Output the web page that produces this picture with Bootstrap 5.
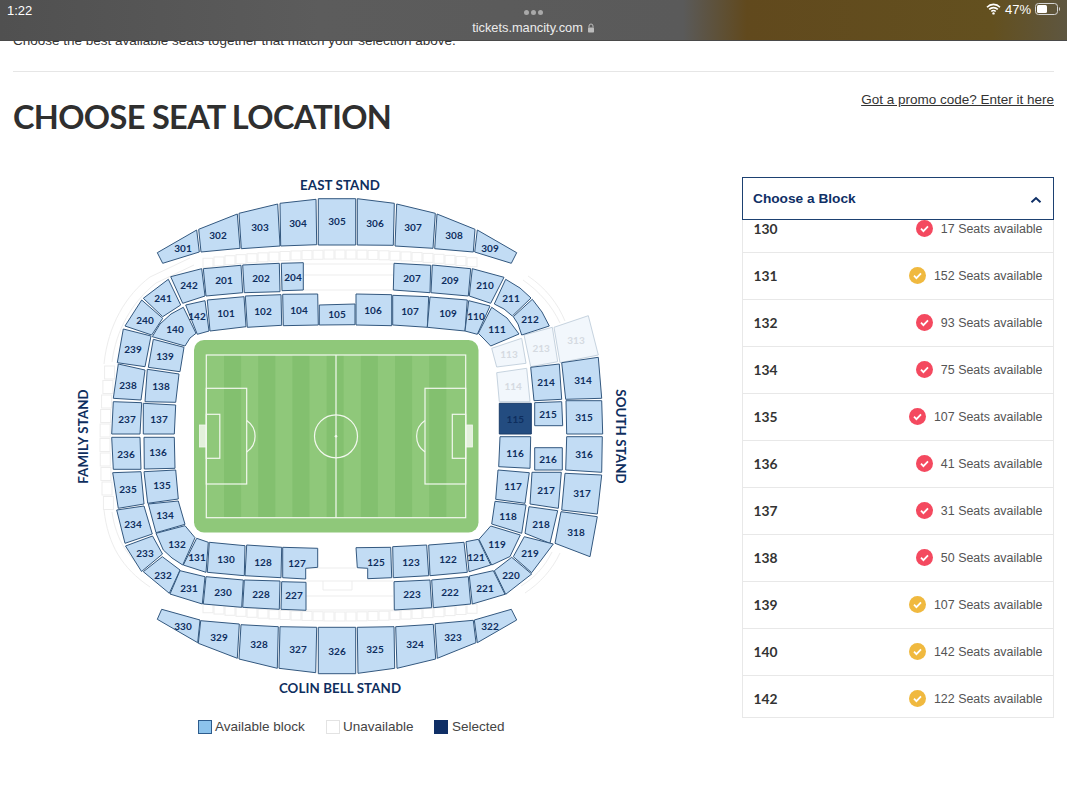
<!DOCTYPE html>
<html lang="en">
<head>
<meta charset="utf-8">
<title>Choose seat location</title>
<link href="https://cdn.jsdelivr.net/npm/bootstrap@5.3.0/dist/css/bootstrap.min.css" rel="stylesheet">
<style>
html,body{background:#fff;height:800px;overflow:hidden}
body{font-family:"Liberation Sans",Arial,sans-serif;color:#3a3a3a}
.ipad-bar{height:41px;background:linear-gradient(90deg,#505050 0,#5c5c5c 30%,#5a5a5a 64%,#61491d 70%,#63501f 93%,#5e5640 100%);border-bottom:1px solid #4a4a4a;color:#fff}
.bar-time{font-size:13px;line-height:1;padding:4px 0 0 7px}
.bar-mid{top:0;left:50%;transform:translateX(-50%);width:160px;text-align:center}
.bar-dots{height:16px;padding-top:10px}
.bar-dots i{display:inline-block;width:5px;height:5px;border-radius:50%;background:#a9a9a9;margin:0 1px;vertical-align:top}
.bar-host{font-size:12.8px;line-height:1;margin-top:6px;color:#ececec}
.bar-right{font-size:13px;line-height:1;padding:3px 6px 0 0}
.page-wrap{padding:33px 13px 0}
.intro-text{font-size:13.5px;line-height:16px;margin:0 0 22px;color:#333}
.rule-line{margin:0;border:0;border-top:1px solid #e6e6e6;opacity:1}
.head-row{height:105px}
.page-title{font-family:Lato,sans-serif;font-weight:700;font-size:32.5px;line-height:44px;color:#2f2f2f;margin:23px 0 0;letter-spacing:-.65px}
.promo-link{font-size:13.5px;color:#333;text-decoration:underline;margin-top:18px}
.map-col{width:570px;margin-left:57px}
.map-svg{display:block;width:570px;height:530px}
.map-legend{font-size:13.5px;line-height:16px;color:#444;margin:12px 0 0 128px}
.key-box{display:inline-block;width:14px;height:14px;border:1px solid #2d5c8d;background:#8cc3ec}
.key-none{background:#fff;border-color:#e3e3e3}
.key-sel{background:#0f2f66;border-color:#0f2f66}
.legend-item{gap:3px}
.legend-a{width:128px}.legend-b{width:108px}
.legend-c{gap:4px}
.block-col{width:312px;margin-left:auto}
.block-head{height:43px;border:1px solid #1d4171;padding:2px 11px 0 10px;font-size:13.7px;font-weight:700;color:#0f2f66}
.block-list{height:498px;overflow:hidden;border:1px solid #e8e8e8;border-top:0;border-radius:0}
.block-item{height:47px;flex:none;padding:0 10.5px;border-color:#e8e8e8;border-width:0 0 1px;color:#555;font-size:12.45px}
.block-list .block-item:first-child{margin-top:-14px;border-radius:0}
.block-no{font-family:Lato,sans-serif;font-weight:700;font-size:13.8px;color:#333}
.seat-note{gap:8px}
.seat-poly{fill:#c2dcf4;stroke:#33587f;stroke-width:1}
.seat-off{fill:#f2f7fc;stroke:#c6d3df}
.seat-sel{fill:#234c80;stroke:#1a3c69}
.seat-txt{font-family:Lato,sans-serif;font-weight:700;font-size:10px;fill:#0e2e5e;text-anchor:middle;dominant-baseline:central}
.txt-off{fill:#d5dae1}
.stand-txt{font-family:Lato,sans-serif;font-weight:700;font-size:13.3px;fill:#0e2e5e;text-anchor:middle;dominant-baseline:central;letter-spacing:.1px}
.ghost{fill:none;stroke:#ededed;stroke-width:1}
.pitch-line{fill:none;stroke:#f2f8ee;stroke-width:1.2}
</style>
</head>
<body>
<div class="ipad-bar fixed-top d-flex justify-content-between">
  <div class="bar-time">1:22</div>
  <div class="bar-mid position-absolute">
    <div class="bar-dots"><i></i><i></i><i></i></div>
    <div class="bar-host d-flex justify-content-center align-items-center gap-1">tickets.mancity.com
      <svg width="8" height="10" viewBox="0 0 8 10"><path d="M2 4.5V3a2 2 0 0 1 4 0v1.5" fill="none" stroke="#bbb" stroke-width="1"/><rect x="1" y="4.5" width="6" height="5" rx=".7" fill="#bbb"/></svg>
    </div>
  </div>
  <div class="bar-right d-flex align-items-start gap-1">
    <svg width="15" height="12" viewBox="0 0 15 12" class="mt-0"><path d="M1 4.2a9 9 0 0 1 13 0M3.2 6.4a6 6 0 0 1 8.6 0M5.3 8.5a3 3 0 0 1 4.4 0" fill="none" stroke="#fff" stroke-width="1.6"/><circle cx="7.5" cy="10.4" r="1.2" fill="#fff"/></svg>
    <span>47%</span>
    <svg width="26" height="12" viewBox="0 0 26 12"><rect x=".5" y=".5" width="22" height="11" rx="3" fill="none" stroke="#d5d5d5"/><rect x="2" y="2" width="10" height="8" rx="1.5" fill="#fff"/><path d="M24 4v4a2 2 0 0 0 1-2 2 2 0 0 0-1-2z" fill="#d5d5d5"/></svg>
  </div>
</div>

<main class="page-wrap">
  <p class="intro-text">Choose the best available seats together that match your selection above.</p>
  <hr class="rule-line">
  <div class="head-row d-flex justify-content-between align-items-start">
    <h1 class="page-title">CHOOSE SEAT LOCATION</h1>
    <a class="promo-link" href="#">Got a promo code? Enter it here</a>
  </div>
  <div class="d-flex align-items-start">
    <div class="map-col">
      <svg class="map-svg" id="stadium" viewBox="70 177 570 530" role="img" aria-label="Stadium map"></svg>
      <div class="map-legend d-flex">
        <div class="legend-item legend-a d-flex align-items-center"><span class="key-box"></span>Available block</div>
        <div class="legend-item legend-b d-flex align-items-center"><span class="key-box key-none"></span>Unavailable</div>
        <div class="legend-item legend-c d-flex align-items-center"><span class="key-box key-sel"></span>Selected</div>
      </div>
    </div>
    <div class="block-col">
      <div class="block-head d-flex justify-content-between align-items-center">Choose a Block
        <svg width="12" height="8" viewBox="0 0 12 8"><path d="M1.5 6.2 6 2l4.5 4.2" fill="none" stroke="#0f2f66" stroke-width="2"/></svg>
      </div>
      <div class="list-group block-list" id="blocks"></div>
    </div>
  </div>
</main>

<script src="https://cdn.jsdelivr.net/npm/bootstrap@5.3.0/dist/js/bootstrap.bundle.min.js"></script>
<script>
const S=[
['301',157.3,252.7,196.7,230,199.3,252,162.7,263.3,{l:[183,248]}],
['302',198.7,229.3,237.3,214,240,248.3,201,252,{l:[218,235]}],
['303',239,213.3,277.7,204,280,246,241.3,248.7,{l:[260,227]}],
['304',280,203.3,316,199.3,316.7,244.7,280.7,246,{l:[298,223]}],
['305',318.3,198.7,355.7,198.7,355.7,245,318.3,245,{l:[337,221]}],
['306',357.3,198.7,394.3,203.3,393.3,245.3,357.3,245,{l:[375,223]}],
['307',396.7,204,435.3,213.3,433,248.3,395,246,{l:[413,227]}],
['308',437,214,475,229.3,473.3,252,434.7,248.7,{l:[454,235]}],
['309',477.3,230,516.7,252.7,511.3,263.3,474.7,252,{l:[490,248]}],
['330',161.7,609.3,200,620,197.7,642.7,157.3,619.3,{l:[183,626]}],
['329',200.7,620.7,239.3,624,237.3,658.3,198.3,643.3,{l:[219,637]}],
['328',241,624.7,278.3,626.7,277.3,668.3,239,659,{l:[259,644]}],
['327',280,626.7,316.7,627.3,315.7,672.7,279,668.3,{l:[298,649]}],
['326',318.3,627.3,355.7,627.3,355.7,673.7,318.3,673.7,{l:[337,651]}],
['325',357.3,627.3,394,626.7,394.7,668.3,358,673.3,{l:[375,649]}],
['324',395.7,626.7,433.3,624.3,435.7,659,397,668.3,{l:[415,644]}],
['323',435,623.7,473.3,620.3,476,642.7,437.3,658.3,{l:[453,637]}],
['322',474.3,620,511.3,609.3,516.7,620,477.3,642.7,{l:[490,626]}],
['242',170.7,276.7,201.7,268.7,205,296,182.7,303.3,{l:[189,285]}],
['201',203.3,268.7,241,265.3,242.7,292.7,206,296,{l:[224,280]}],
['202',242.7,265,279.3,263.3,280,291.7,244.3,292.7,{l:[261,278]}],
['204',281.3,263.3,303.3,262.7,303.3,290,282,290.7,{l:[293,277]}],
['241',168.3,279.3,180.7,305,162.7,316.7,143.3,298.3,{l:[163,298]}],
['240',141.7,300,162.7,318.3,151.7,335,125,326,{l:[145,320]}],
['239',123.3,329,151,336,145,366.7,117.3,362.7,{l:[133,349]}],
['238',118.3,364,145,370,141,400,113.3,398.3,{l:[128,385]}],
['237',113.3,401.7,141.7,402.7,140,434,111.7,434,{l:[127,419]}],
['236',111.7,437.3,140,437.3,141,469.3,113.3,469.3,{l:[126,454]}],
['235',112.7,472.7,141,471.7,144,504,118.3,508.3,{l:[128,489]}],
['234',116.7,510,144,506,152.3,534,125,543.3,{l:[133,524]}],
['233',125.5,546,152.5,536,162.5,554,141.5,571.5,{l:[145,553]}],
['232',162.3,556.7,180,570,169.3,593.3,143.3,571.7,{l:[163,575]}],
['231',180,570.7,205,576.7,202.3,604,170,594,{l:[189,588]}],
['230',206,576.7,243.3,580,241.7,607.3,203.3,604,{l:[223,592]}],
['228',244.3,580,280,581,279.3,609.3,242.7,607.3,{l:[261,594]}],
['227',281.7,581.7,306,582.3,306,610.3,281,609.3,{l:[294,595]}],
['140',152.3,336.7,160,324,171,314,183.3,307.3,196,333.3,190,338,185,346,{l:[175,329]}],
['142',185.7,305,205,300.7,209,331,197.3,334.3,{l:[197,316]}],
['101',207.3,300,244,296.7,246,326.7,210,331,{l:[226,313]}],
['102',245.3,296,281,294.7,281.7,325.3,247.3,327.3,{l:[263,311]}],
['104',282.7,294.3,317.7,294,318.3,325,283.3,325.7,{l:[299,310]}],
['105',319.3,305,355,304,355,324.7,319.3,325,{l:[337,314]}],
['106',356,294,391.7,294.7,391.7,325.7,356,325,{l:[373,310]}],
['107',392.7,295.3,428.7,296.7,427.3,327.3,392.7,325,{l:[410,311]}],
['109',430,297,467.3,300,465,331,427.3,327.3,{l:[448,313]}],
['110',468.7,300.7,490,306,477.3,334.3,465,331,{l:[476,316]}],
['111',491.7,307.3,507,318,519,334,490.7,346,484,339,478.3,333.3,{l:[497,329]}],
['113',491.7,348.3,521.7,338.3,526,363.3,496.7,367,'off'],
['213',524,335,552.3,327.3,557.7,361.7,530.7,366.7,'off'],
['313',554,327.3,588.3,315.7,598.3,355,560,362.7,{o:1,l:[576,340]}],
['207',394,263.3,430.7,265.3,430,292.7,393.3,290,{l:[412,278]}],
['209',432.3,265,470.7,268.7,468.3,296,431,292.7,{l:[450,280]}],
['210',472.3,268.7,504,277.3,490.7,303.3,469.3,296,{l:[485,285]}],
['211',505.7,279.3,520,288,531,298,512.3,316,504,309,494.3,304,{l:[511,298]}],
['212',532.3,299.3,542,312,549.3,326,521.7,335,518,324,513.3,316.7,{l:[530,319]}],
['114',496.7,372.7,526.7,368.3,530,401.7,499.3,401.7,'off'],
['115',499.3,403.3,531.3,403.3,531.3,434,499.3,434,'sel'],
['116',500,436.7,530.7,436.7,530,468.3,498.7,466.7,{l:[515,453]}],
['117',498,470,529.3,472.7,525,503.3,495.7,499.3,{l:[513,486]}],
['118',495,501.3,526,505,521.7,533.3,491.7,524,{l:[508,516]}],
['119',490.7,526,520.3,535,510,556.5,491.7,565,479,539.3,{l:[497,544]}],
['121',466,541.7,478.3,539.3,490.7,565,469,571.7,{l:[476,557]}],
['122',428.7,545,464,542.3,467.3,572.3,430,575.7,{l:[448,559]}],
['123',392.7,546.7,426.7,545,428.7,575.7,393.3,577.7,{l:[411,562]}],
['125',356,547.7,390.7,547.3,391.7,577.7,367.7,578.7,367.7,568.3,357.3,567.7,{l:[376,562]}],
['127',282.7,547.3,317.7,548.3,317.7,567.3,305.7,568.3,305.7,579,282.7,577.7,{l:[297,563]}],
['128',246.7,545,281.7,547.3,281,577.7,245,575.7,{l:[263,562]}],
['130',209.3,542.3,245,545.7,244.3,575.7,207.3,572.3,{l:[226,559]}],
['131',196.7,538.3,208.3,542.3,206,572.3,183.3,565,{l:[197,557]}],
['132',156,533.3,185,525.7,195,537.7,182.7,565,172,558,163.3,550,{l:[177,544]}],
['134',148.3,504,178.3,501,185,524.3,156,532.7,{l:[165,515]}],
['135',144,471.7,175.7,470,178.3,499,147.7,503.3,{l:[162,485]}],
['136',144,437.3,174.3,437.3,175,468.3,144.3,469,{l:[158,452]}],
['137',143.3,403.3,175.7,405,174.3,434,143.3,434,{l:[159,419]}],
['138',147.3,369.3,179,374,175.7,402.3,145,401.7,{l:[161,386]}],
['139',153.3,339.3,184,347.3,180,371.7,148.3,367.3,{l:[165,356]}],
['214',530.7,367.3,559.3,364,561.7,399.3,534,400.7,{l:[546,382]}],
['215',534.7,402.7,561.7,401.7,562.7,425.7,534.7,425.7,{l:[548,414]}],
['216',534.7,447.7,562.3,447.7,562.3,470,534.7,470,{l:[548,459]}],
['217',532,472.3,561.3,472.3,558.3,508.3,530,504,{l:[546,490]}],
['218',529,506.7,557.7,510.7,550,543.3,525,533.3,{l:[541,524]}],
['219',524.3,536.7,553.3,544,531.7,572.7,513.3,556.7,{l:[530,553]}],
['220',511.7,557.3,531.7,574,505.7,594.3,494.3,570.7,{l:[511,575]}],
['221',469.3,576,493.3,570.7,505,594.3,472.3,604,{l:[485,588]}],
['222',431.7,580,468.3,576.7,470.7,604,433.3,607.7,{l:[450,592]}],
['223',394,581.7,430,580,431.7,607.7,394.3,610,{l:[412,594]}],
['314',561.7,362.7,598.3,357.3,601.7,398.3,565.7,399.3,{l:[583,380]}],
['315',566,400.7,601.7,400.7,602.7,434,566.7,434,{l:[584,417]}],
['316',566.7,436.7,602.3,436.7,601.7,472.3,565.7,470,{l:[584,454]}],
['317',565,473.3,601.7,475,597.3,514,561.7,510,{l:[582,493]}],
['318',561,511.7,597.3,516.7,590,556.7,555,543.3,{l:[576,532]}]
];
let g='';
// faint outlines of closed tiers
for(let x=203;x<470;x+=11){
  const dy=Math.pow((x-337)/140,2)*9;
  g+=`<rect class="ghost" x="${x}" y="${250+dy}" width="10" height="9"/>`;
  g+=`<rect class="ghost" x="${x}" y="${612-dy}" width="10" height="9"/>`;
}
for(let y=366;y<510;y+=14.5){
  const dx=Math.pow((y-436)/80,2)*6;
  g+=`<rect class="ghost" x="${100+dx}" y="${y}" width="10" height="13"/>`;
}
g+=`<path class="ghost" d="M104 364C108 325 126 295 150 277M112 362C116 330 132 302 156 283M150 277 190 258M156 283 194 265"/>`;
g+=`<path class="ghost" d="M104 510C108 545 122 568 150 587M112 512C116 540 128 560 157 580"/>`;
g+=`<path class="ghost" d="M523 280C540 292 552 306 560 323M528 276C546 288 558 304 565 321"/>`;
g+=`<path class="ghost" d="M525 593C540 583 552 570 560 553M521 586C534 578 544 568 552 552"/>`;
g+=`<path class="ghost" d="M304 264H393M304 275H393M304 290H393M305 568H356M306 581H393M306 596H393M306 610H393M323 581V590H352V581"/>`;
// pitch
g+=`<rect x="194" y="340" width="284.5" height="192.5" rx="10" fill="#8fc87a"/>`;
for(let x=224;x<440;x+=34.2)g+=`<rect x="${x}" y="355" width="17.1" height="163" fill="#83c06f"/>`;
g+=`<rect x="199.5" y="425" width="6.5" height="22" fill="#e3f0dc" stroke="#f2f8ee" stroke-width=".8"/><rect x="466" y="425" width="6.5" height="22" fill="#e3f0dc" stroke="#f2f8ee" stroke-width=".8"/>`;
g+=`<g class="pitch-line"><rect x="206.3" y="355" width="259.4" height="162.7"/><path d="M336 355V517.7M246.7 420.5A19 19 0 0 1 246.7 452M425 420.5A19 19 0 0 0 425 452"/><circle cx="336" cy="436.3" r="21.5"/><rect x="206.3" y="388.3" width="40.4" height="95.7"/><rect x="206.3" y="414.3" width="13.5" height="44"/><rect x="425" y="388.3" width="40.7" height="95.7"/><rect x="452.3" y="414.3" width="13.4" height="44"/></g><circle cx="336" cy="436.3" r="1.3" fill="#f2f8ee"/>`;
// blocks
for(const s of S){
  const opt=s[s.length-1];
  const off=opt==='off'||(opt&&opt.o);
  const cls=off?' seat-off':opt==='sel'?' seat-sel':'';
  const nums=s.slice(1).filter(v=>typeof v==='number');
  let pts=[],cx=0,cy=0;
  for(let i=0;i<nums.length;i+=2){pts.push(nums[i]+','+nums[i+1]);cx+=nums[i];cy+=nums[i+1];}
  cx/=pts.length;cy/=pts.length;
  if(opt&&opt.l){cx=opt.l[0];cy=opt.l[1];}
  g+=`<polygon class="seat-poly${cls}" points="${pts.join(' ')}"/>`;
  g+=`<text class="seat-txt${off?' txt-off':''}" x="${cx}" y="${cy}">${s[0]}</text>`;
}
g+=`<text class="stand-txt" x="340" y="184.5">EAST STAND</text><text class="stand-txt" x="340" y="687.5">COLIN BELL STAND</text>`;
g+=`<text class="stand-txt" transform="translate(82.5 436.5) rotate(-90)">FAMILY STAND</text><text class="stand-txt" transform="translate(620.5 436.5) rotate(90)">SOUTH STAND</text>`;
document.getElementById('stadium').innerHTML=g;
const R='#f4495f',Y='#f0b93f';
const L=[['130',17,R],['131',152,Y],['132',93,R],['134',75,R],['135',107,R],['136',41,R],['137',31,R],['138',50,R],['139',107,Y],['140',142,Y],['142',122,Y]];
document.getElementById('blocks').innerHTML=L.map(r=>`<div class="list-group-item block-item d-flex justify-content-between align-items-center"><span class="block-no">${r[0]}</span><span class="seat-note d-flex align-items-center"><svg width="17" height="17" viewBox="0 0 17 17"><circle cx="8.5" cy="8.5" r="8.5" fill="${r[2]}"/><path d="M5 8.7l2.4 2.4L12 6.3" fill="none" stroke="#fff" stroke-width="1.8"/></svg>${r[1]} Seats available</span></div>`).join('');
</script>
</body>
</html>
